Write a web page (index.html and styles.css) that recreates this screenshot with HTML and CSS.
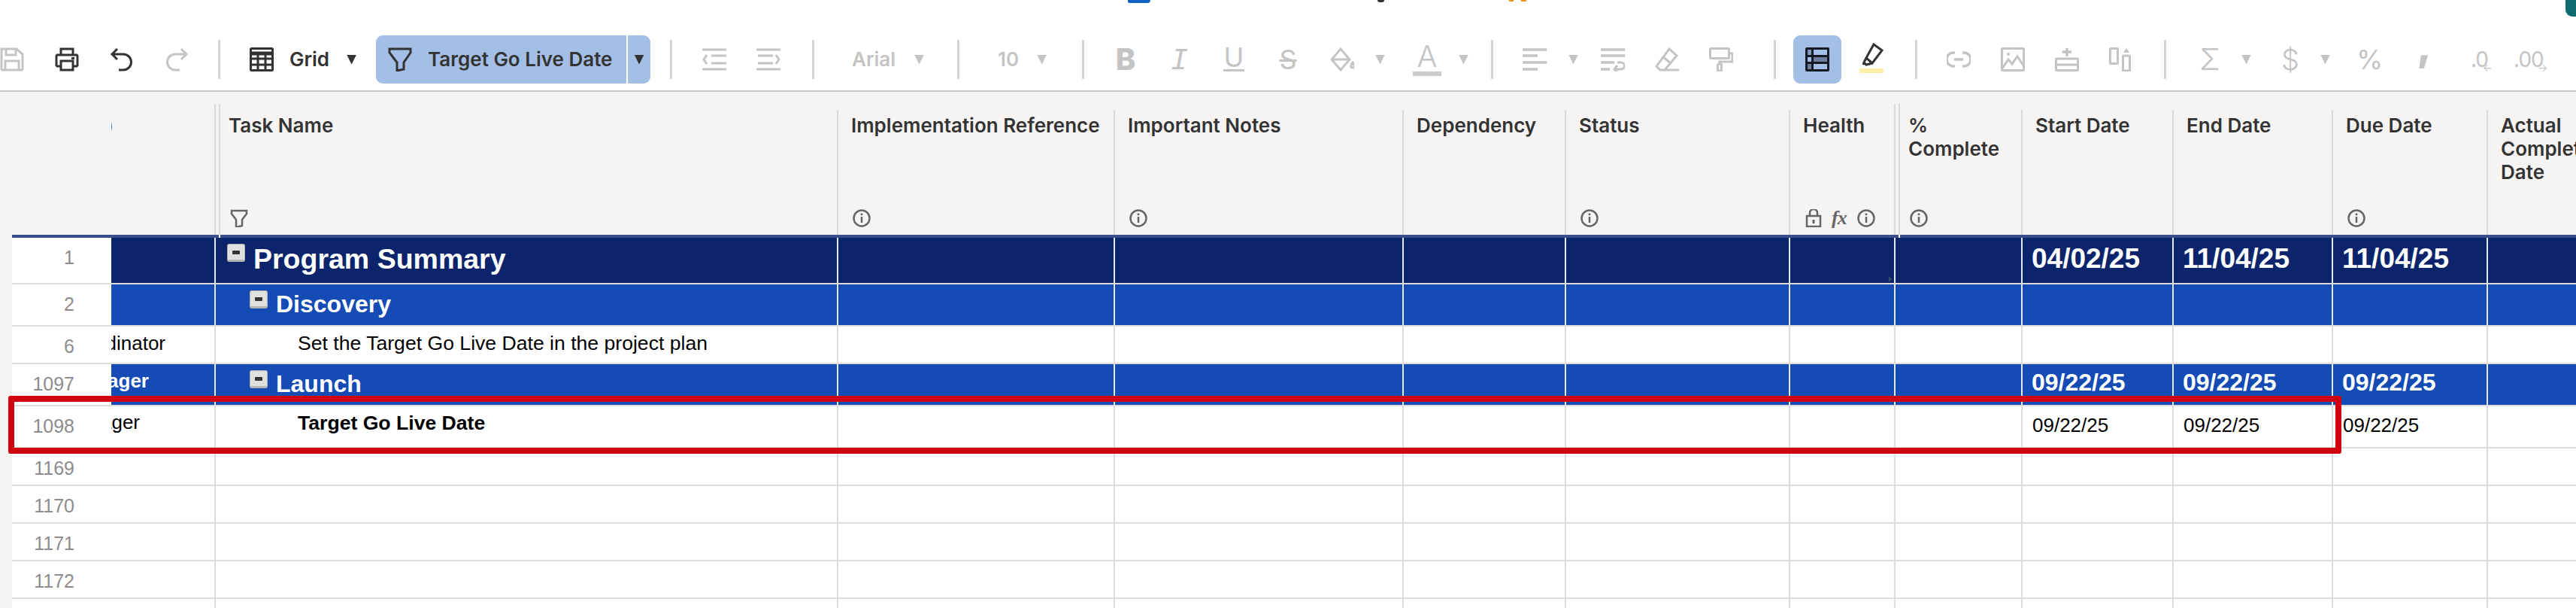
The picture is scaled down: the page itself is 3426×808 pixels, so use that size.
FILE: index.html
```html
<!DOCTYPE html>
<html lang="en">
<head>
<meta charset="utf-8">
<title>Target Go Live Date</title>
<link rel="stylesheet" href="styles.css">
</head>
<body>
<svg class="sprite" aria-hidden="true">
  <symbol id="i-save" viewBox="0 0 32 32"><path d="M2 2h20l8 7v20l-1 1H3l-1-1zM8 2v8h13V2M7 30V18h18v12" fill="none" stroke="currentColor" stroke-width="3"/></symbol>
  <symbol id="i-print" viewBox="0 0 32 32"><path d="M8 10V2h16v8M8 25H3l-1-1V11l1-1h26l1 1v13l-1 1h-5" fill="none" stroke="currentColor" stroke-width="3"/><rect x="8" y="18" width="16" height="12" fill="none" stroke="currentColor" stroke-width="3"/><rect x="22" y="13" width="4" height="3" fill="currentColor"/></symbol>
  <symbol id="i-undo" viewBox="0 0 32 32"><path d="M10 2L3 9l7 7M3 9h15a10.500 10.500 0 0 1 0 21h-6" fill="none" stroke="currentColor" stroke-width="3"/></symbol>
  <symbol id="i-redo" viewBox="0 0 32 32"><path d="M22 2l7 7-7 7M29 9H14a10.500 10.500 0 0 0 0 21h6" fill="none" stroke="currentColor" stroke-width="3"/></symbol>
  <symbol id="i-table" viewBox="0 0 32 32"><rect x="1.500" y="1.500" width="29" height="29" rx="1" fill="none" stroke="currentColor" stroke-width="3"/><path d="M1 8h30" stroke="currentColor" stroke-width="5"/><path d="M1 15h30M1 23h30M11 10v21M21 10v21" stroke="currentColor" stroke-width="3"/></symbol>
  <symbol id="i-funnel" viewBox="0 0 32 32"><path d="M2 2h28v5L21 20v9l-9 2V20L2 7z" fill="none" stroke="currentColor" stroke-width="3"/></symbol>
  <symbol id="i-outdent" viewBox="0 0 32 32"><path d="M0 3h32M0 29h32M12 11h20M12 21h20M6 10l-4 6 4 6" fill="none" stroke="currentColor" stroke-width="3"/></symbol>
  <symbol id="i-indent" viewBox="0 0 32 32"><path d="M0 3h32M0 29h32M2 11h20M2 21h20M26 10l4 6-4 6" fill="none" stroke="currentColor" stroke-width="3"/></symbol>
  <symbol id="i-fill" viewBox="0 0 32 32"><path d="M14 2L2 16l12 14 12-14z M2 16h24" fill="none" stroke="currentColor" stroke-width="3"/><path d="M30 20c-3 4-3 7 0 7s3-3 0-7z" fill="none" stroke="currentColor" stroke-width="3"/></symbol>
  <symbol id="i-align" viewBox="0 0 32 32"><path d="M0 3h32M0 11h20M0 20h32M0 29h20" fill="none" stroke="currentColor" stroke-width="3.500"/></symbol>
  <symbol id="i-wrap" viewBox="0 0 32 32"><path d="M0 3h32M0 11h32M0 20h18M0 29h12" fill="none" stroke="currentColor" stroke-width="3.500"/><path d="M22 20h5a4 4 0 0 1 0 9h-8M22 24l-4 5 4 4" fill="none" stroke="currentColor" stroke-width="3"/></symbol>
  <symbol id="i-eraser" viewBox="0 0 32 32"><path d="M19 2l10 9-16 19H7l-5-5zM10 12l11 9M10 30h22" fill="none" stroke="currentColor" stroke-width="3"/></symbol>
  <symbol id="i-roller" viewBox="0 0 32 32"><rect x="1.500" y="1.500" width="25" height="13" rx="1" fill="none" stroke="currentColor" stroke-width="3"/><path d="M27 8h4v11H14v3" fill="none" stroke="currentColor" stroke-width="3"/><rect x="11.500" y="22" width="5" height="9" rx="1" fill="none" stroke="currentColor" stroke-width="3"/></symbol>
  <symbol id="i-grid-on" viewBox="0 0 32 32"><rect width="32" height="32" rx="2" fill="#141a24"/><rect x="3" y="3" width="5" height="7" fill="#7f99bd"/><rect x="11" y="3" width="18" height="7" fill="#a3bfe5"/><rect x="3" y="13" width="5" height="6" fill="#a3bfe5"/><rect x="11" y="13" width="18" height="6" fill="#6b7f9c"/><rect x="3" y="22" width="5" height="7" fill="#6b7f9c"/><rect x="11" y="22" width="18" height="7" fill="#a3bfe5"/></symbol>
  <symbol id="i-marker" viewBox="0 0 32 32"><path d="M19 2l11 8-13 17-8-7zM9 20l-3 6 3 3 8-2M6 26l-1 3" fill="none" stroke="currentColor" stroke-width="3"/></symbol>
  <symbol id="i-link" viewBox="0 0 32 32"><path d="M11 7H9a9 9 0 0 0 0 18h2M21 7h2a9 9 0 0 1 0 18h-2M10 16h12" fill="none" stroke="currentColor" stroke-width="3.500"/></symbol>
  <symbol id="i-image" viewBox="0 0 32 32"><rect x="1.500" y="1.500" width="29" height="29" rx="1" fill="none" stroke="currentColor" stroke-width="3"/><path d="M2 28l8-12 5 6 7-10 8 12" fill="none" stroke="currentColor" stroke-width="3"/><circle cx="10" cy="9" r="2" fill="currentColor"/></symbol>
  <symbol id="i-row" viewBox="0 0 32 32"><path d="M16 1v11M10 6h12" fill="none" stroke="currentColor" stroke-width="3.500"/><rect x="1.500" y="15" width="29" height="15.500" rx="1" fill="none" stroke="currentColor" stroke-width="3"/><path d="M2 23h28" stroke="currentColor" stroke-width="3"/></symbol>
  <symbol id="i-col" viewBox="0 0 32 32"><rect x="1.500" y="1.500" width="10" height="20" rx="1" fill="none" stroke="currentColor" stroke-width="3"/><rect x="18.500" y="11" width="9" height="20" rx="1" fill="none" stroke="currentColor" stroke-width="3"/><path d="M23 1l4 6h-8z" fill="currentColor"/></symbol>
  <symbol id="i-info" viewBox="0 0 24 24"><circle cx="12" cy="12" r="10.500" fill="none" stroke="currentColor" stroke-width="2.500"/><path d="M12 10v8" stroke="currentColor" stroke-width="2.500"/><circle cx="12" cy="6.800" r="1.500" fill="currentColor"/></symbol>
  <symbol id="i-lock" viewBox="0 0 24 24"><path d="M7 9V5a5 5 0 0 1 10 0v4" fill="none" stroke="currentColor" stroke-width="2.500"/><rect x="3" y="9" width="18" height="14" fill="none" stroke="currentColor" stroke-width="2.500"/><path d="M12 14v5" stroke="currentColor" stroke-width="3"/></symbol>
  <symbol id="i-ftn" viewBox="0 0 24 24"><path d="M2 2h20v4l-6 8v8l-8 2V14L2 6z" fill="none" stroke="currentColor" stroke-width="2.500"/></symbol>
</svg>

<div class="title-bits">
  <span class="bit bit-doc"></span>
  <span class="bit bit-dark"></span>
  <span class="bit bit-star-a"></span>
  <span class="bit bit-star-b"></span>
  <span class="bit bit-avatar"></span>
</div>

<div class="toolbar">
  <div class="tg s1">
    <svg class="ic off"><use href="#i-save"/></svg>
    <svg class="ic on"><use href="#i-print"/></svg>
    <svg class="ic on"><use href="#i-undo"/></svg>
    <svg class="ic off"><use href="#i-redo"/></svg>
  </div>
  <i class="sep"></i>
  <div class="tg s2">
    <svg class="ic on"><use href="#i-table"/></svg>
    <span class="tb-label grid-label">Grid</span>
    <i class="caret on grid-caret"></i>
    <div class="filter-btn">
      <svg class="ic on"><use href="#i-funnel"/></svg>
      <span class="tb-label filter-label">Target Go Live Date</span>
      <span class="filter-split"><i class="caret on"></i></span>
    </div>
  </div>
  <i class="sep"></i>
  <div class="tg s3">
    <svg class="ic off"><use href="#i-outdent"/></svg>
    <svg class="ic off"><use href="#i-indent"/></svg>
  </div>
  <i class="sep"></i>
  <div class="tg s4">
    <span class="tb-label muted">Arial</span>
    <i class="caret off"></i>
  </div>
  <i class="sep"></i>
  <div class="tg s5">
    <span class="tb-label muted">10</span>
    <i class="caret off"></i>
  </div>
  <i class="sep"></i>
  <div class="tg s6">
    <span class="glyph g-b">B</span>
    <span class="glyph g-i">I</span>
    <span class="glyph g-u">U</span>
    <span class="glyph g-s">S</span>
    <svg class="ic off"><use href="#i-fill"/></svg>
    <i class="caret off c-fill"></i>
    <span class="glyph g-a">A</span>
    <i class="caret off c-a"></i>
  </div>
  <i class="sep"></i>
  <div class="tg s7">
    <svg class="ic off"><use href="#i-align"/></svg>
    <i class="caret off c-align"></i>
    <svg class="ic off ic-wrap"><use href="#i-wrap"/></svg>
    <svg class="ic off ic-eraser"><use href="#i-eraser"/></svg>
    <svg class="ic off ic-roller"><use href="#i-roller"/></svg>
  </div>
  <i class="sep"></i>
  <div class="tg s8">
    <div class="grid-btn"><svg class="ic"><use href="#i-grid-on"/></svg></div>
    <div class="marker"><svg class="ic on"><use href="#i-marker"/></svg></div>
  </div>
  <i class="sep"></i>
  <div class="tg s9">
    <svg class="ic off"><use href="#i-link"/></svg>
    <svg class="ic off"><use href="#i-image"/></svg>
    <svg class="ic off"><use href="#i-row"/></svg>
    <svg class="ic off"><use href="#i-col"/></svg>
  </div>
  <i class="sep"></i>
  <div class="tg s10">
    <span class="glyph g-sum">Σ</span>
    <i class="caret off c-sum"></i>
    <span class="glyph g-usd">$</span>
    <i class="caret off c-usd"></i>
    <span class="glyph g-pct">%</span>
    <span class="glyph g-comma">,</span>
    <span class="dec dec-less">.0<small>←</small></span>
    <span class="dec dec-more">.00<small>→</small></span>
  </div>
</div>

<div class="sheet">
  <div class="head">
    <div class="hc hc-num"></div>
    <div class="hc hc-frozen"><span class="clip clip-head">Assigned To (Role)</span></div>
    <div class="hc split"><span class="hname">Task Name</span><div class="hicons"><svg class="hi"><use href="#i-ftn"/></svg></div></div>
    <div class="hc"><span class="hname">Implementation Reference</span><div class="hicons"><svg class="hi"><use href="#i-info"/></svg></div></div>
    <div class="hc"><span class="hname">Important Notes</span><div class="hicons"><svg class="hi"><use href="#i-info"/></svg></div></div>
    <div class="hc"><span class="hname">Dependency</span></div>
    <div class="hc"><span class="hname">Status</span><div class="hicons"><svg class="hi"><use href="#i-info"/></svg></div></div>
    <div class="hc"><span class="hname">Health</span><div class="hicons"><svg class="hi"><use href="#i-lock"/></svg><span class="fx">fx</span><svg class="hi"><use href="#i-info"/></svg></div></div>
    <div class="hc split"><span class="hname">%<br>Complete</span><div class="hicons"><svg class="hi"><use href="#i-info"/></svg></div></div>
    <div class="hc"><span class="hname">Start Date</span></div>
    <div class="hc"><span class="hname">End Date</span></div>
    <div class="hc"><span class="hname">Due Date</span><div class="hicons"><svg class="hi"><use href="#i-info"/></svg></div></div>
    <div class="hc hc-last"><span class="hname">Actual<br>Complete<br>Date</span></div>
  </div>

  <div class="row r-program">
    <div class="c num">1</div><div class="c frozen"></div>
    <div class="c task lvl0"><span class="tog"></span><span>Program Summary</span></div>
    <div class="c"></div><div class="c"></div><div class="c"></div><div class="c"></div><div class="c health-flag"></div><div class="c"></div>
    <div class="c date">04/02/25</div><div class="c date">11/04/25</div><div class="c date">11/04/25</div><div class="c end"></div>
  </div>
  <div class="row r-phase r-discovery">
    <div class="c num">2</div><div class="c frozen"></div>
    <div class="c task lvl1"><span class="tog"></span><span>Discovery</span></div>
    <div class="c"></div><div class="c"></div><div class="c"></div><div class="c"></div><div class="c"></div><div class="c"></div>
    <div class="c"></div><div class="c"></div><div class="c"></div><div class="c end"></div>
  </div>
  <div class="row r-plain r-short">
    <div class="c num">6</div><div class="c frozen"><span class="clip clip-coord">Coordinator</span></div>
    <div class="c task lvl2"><span>Set the Target Go Live Date in the project plan</span></div>
    <div class="c"></div><div class="c"></div><div class="c"></div><div class="c"></div><div class="c"></div><div class="c"></div>
    <div class="c"></div><div class="c"></div><div class="c"></div><div class="c end"></div>
  </div>
  <div class="row r-phase r-launch">
    <div class="c num">1097</div><div class="c frozen"><span class="clip clip-mgr-b">Project Manager</span></div>
    <div class="c task lvl1"><span class="tog"></span><span>Launch</span></div>
    <div class="c"></div><div class="c"></div><div class="c"></div><div class="c"></div><div class="c"></div><div class="c"></div>
    <div class="c date">09/22/25</div><div class="c date">09/22/25</div><div class="c date">09/22/25</div><div class="c end"></div>
  </div>
  <div class="row r-plain r-tall">
    <div class="c num">1098</div><div class="c frozen"><span class="clip clip-mgr">Project Manager</span></div>
    <div class="c task lvl2 strong"><span>Target Go Live Date</span></div>
    <div class="c"></div><div class="c"></div><div class="c"></div><div class="c"></div><div class="c"></div><div class="c"></div>
    <div class="c date">09/22/25</div><div class="c date">09/22/25</div><div class="c date">09/22/25</div><div class="c end"></div>
  </div>
  <div class="row r-plain r-short">
    <div class="c num">1169</div><div class="c frozen"></div><div class="c task"></div>
    <div class="c"></div><div class="c"></div><div class="c"></div><div class="c"></div><div class="c"></div><div class="c"></div>
    <div class="c"></div><div class="c"></div><div class="c"></div><div class="c end"></div>
  </div>
  <div class="row r-plain r-short">
    <div class="c num">1170</div><div class="c frozen"></div><div class="c task"></div>
    <div class="c"></div><div class="c"></div><div class="c"></div><div class="c"></div><div class="c"></div><div class="c"></div>
    <div class="c"></div><div class="c"></div><div class="c"></div><div class="c end"></div>
  </div>
  <div class="row r-plain r-short">
    <div class="c num">1171</div><div class="c frozen"></div><div class="c task"></div>
    <div class="c"></div><div class="c"></div><div class="c"></div><div class="c"></div><div class="c"></div><div class="c"></div>
    <div class="c"></div><div class="c"></div><div class="c"></div><div class="c end"></div>
  </div>
  <div class="row r-plain r-short">
    <div class="c num">1172</div><div class="c frozen"></div><div class="c task"></div>
    <div class="c"></div><div class="c"></div><div class="c"></div><div class="c"></div><div class="c"></div><div class="c"></div>
    <div class="c"></div><div class="c"></div><div class="c"></div><div class="c end"></div>
  </div>
  <div class="row r-plain r-short">
    <div class="c num"></div><div class="c frozen"></div><div class="c task"></div>
    <div class="c"></div><div class="c"></div><div class="c"></div><div class="c"></div><div class="c"></div><div class="c"></div>
    <div class="c"></div><div class="c"></div><div class="c"></div><div class="c end"></div>
  </div>

  <div class="callout"></div>
</div>
</body>
</html>
```

FILE: styles.css
```css
* { box-sizing: border-box; }
html, body { margin: 0; height: 808px; overflow: hidden; background: #f5f4f2; }
body { position: relative; font-family: "Liberation Sans", Arial, sans-serif; color: #000; }
.sprite { position: absolute; width: 0; height: 0; overflow: hidden; }

/* Cropped title bar remnants */
.title-bits { position: absolute; inset: 0 0 auto 0; height: 0; z-index: 3; }
.bit { position: absolute; top: 0; display: block; }
.bit-doc { left: 1500px; width: 30px; height: 4px; background: #1261c4; border-radius: 0 0 6px 3px; }
.bit-dark { left: 1832px; width: 9px; height: 3px; background: #2f2f2f; border-radius: 0 0 4px 4px; }
.bit-star-a { left: 2007px; width: 6px; height: 2px; background: #e8960c; }
.bit-star-b { left: 2023px; width: 7px; height: 2px; background: #e8960c; }
.bit-avatar { left: 3412px; width: 14px; height: 22px; background: #0e6b70; border-radius: 0 0 0 9px; }

/* Toolbar */
.toolbar { display: flex; height: 122px; background: #fff; border-bottom: 2px solid #c9c8c6; }
.tg { display: flex; align-items: center; height: 64px; margin-top: 47px; }
.sep { display: block; flex: none; width: 3px; height: 52px; margin-top: 53px; background: #d4d4d2; }
.ic { display: block; flex: none; width: 32px; height: 32px; }
.on { color: #333; }
.off { color: #c4c4c4; }
.tb-label { font: 600 26px/32px Inter, "Liberation Sans", sans-serif; color: #333; white-space: nowrap; }
.tb-label.muted { color: #c4c4c4; }
.caret { display: block; flex: none; width: 13px; height: 13px; background: currentColor; clip-path: polygon(0 0, 100% 0, 50% 100%); }

.s1 { width: 290px; gap: 41px; }
.s2 { width: 598px; padding-left: 39px; }
.grid-label { margin-left: 21px; }
.grid-caret { margin-left: 23px; }
.filter-btn { display: flex; align-items: center; width: 365px; height: 64px; margin-left: 26px; padding-left: 16px; background: #a3bfe5; border-radius: 9px; }
.filter-label { margin-left: 21px; }
.filter-split { display: flex; align-items: center; justify-content: center; width: 32px; height: 64px; margin-left: auto; border-left: 2px solid #fff; }
.s3 { width: 186px; padding-left: 40px; gap: 40px; }
.s4 { width: 190px; padding-left: 50px; gap: 25px; }
.s5 { width: 163px; padding-left: 51px; gap: 24px; }
.s6 { width: 541px; padding-left: 39px; gap: 40px; }
.c-fill { margin-left: -12px; }
.c-a { margin-left: -14px; }
.s7 { width: 373px; padding-left: 39px; }
.c-align { margin-left: 29px; }
.ic-wrap { margin-left: 30px; }
.ic-eraser, .ic-roller { margin-left: 40px; }
.s8 { width: 185px; padding-left: 23px; }
.grid-btn { display: flex; align-items: center; justify-content: center; width: 64px; height: 64px; background: #a3bfe5; border-radius: 9px; }
.marker { position: relative; margin-left: 24px; height: 44px; }
.marker::after { content: ""; position: absolute; left: 0; top: 34px; width: 32px; height: 6px; background: #fdeea6; border-radius: 1px; }
.s9 { width: 328px; padding-left: 39px; gap: 40px; }
.s10 { flex: 1; padding-left: 42px; }

.glyph { display: block; flex: none; width: 32px; height: 40px; text-align: center; color: #c4c4c4; font-family: Inter, "Liberation Sans", sans-serif; line-height: 40px; }
.g-b { font-size: 40px; font-weight: 800; }
.g-i { font-family: "DejaVu Sans Mono", monospace; font-style: italic; font-size: 38px; }
.g-u { font-size: 36px; font-weight: 400; line-height: 34px; position: relative; }
.g-u::after { content: ""; position: absolute; left: 2px; right: 2px; top: 33px; height: 3px; background: #c4c4c4; }
.g-s { font-size: 36px; font-weight: 400; text-decoration: line-through; text-decoration-thickness: 3px; }
.g-a { font-size: 40px; font-weight: 300; line-height: 34px; height: 48px; margin-left: 0; position: relative; margin-top: 6px; }
.g-a::after { content: ""; position: absolute; left: -3px; right: -3px; top: 37px; height: 6px; background: #cbcbcb; }
.g-sum { font-size: 40px; font-weight: 300; }
.c-sum { margin-left: 26px; }
.g-usd { font-size: 38px; font-weight: 300; margin-left: 36px; }
.c-usd { margin-left: 24px; }
.g-pct { font-size: 36px; font-weight: 400; margin-left: 35px; }
.g-comma { font-size: 56px; font-weight: 800; margin-left: 42px; line-height: 2px; }
.dec { position: relative; display: block; flex: none; font: 400 28px/40px Inter, "Liberation Sans", sans-serif; color: #c4c4c4; letter-spacing: -1px; }
.dec small { position: absolute; right: -6px; top: 22px; font-size: 14px; line-height: 18px; letter-spacing: 0; }
.dec-less { margin-left: 46px; }
.dec-more { margin-left: 34px; }

/* Sheet */
.sheet { position: relative; height: 686px; overflow: hidden; }
.head, .row { display: grid; grid-template-columns: 132px 139px 828px 368px 384px 216px 298px 140px 169px 201px 212px 206px 1fr; margin-left: 16px; }
.head { height: 194px; padding-top: 24px; border-bottom: 4px solid #3a4d8c; margin-right: 0; }
.hc { position: relative; display: flex; flex-direction: column; justify-content: space-between; min-width: 0; padding: 5px 0 10px 17px; border-right: 2px solid #dddcda; font: 600 26px/31px Inter, "Liberation Sans", sans-serif; color: #333; }
.hc-num { border-right: 0; }
.hc-frozen { display: block; padding: 0; }
.hc-last { border-right: 0; }
.hname { display: block; white-space: nowrap; }
.hicons { display: flex; align-items: center; gap: 12px; height: 24px; margin-left: 2px; color: #666; }
.hi { display: block; flex: none; width: 24px; height: 24px; }
.fx { width: 22px; font: italic 700 26px/24px "Liberation Serif", serif; color: #666; letter-spacing: -1px; }
.split::before { content: ""; position: absolute; left: 4px; top: -8px; bottom: -4px; width: 2px; background: linear-gradient(#dddcda calc(100% - 4px), #fff 0); }
.split::after { content: ""; position: absolute; left: -2px; top: -8px; width: 2px; height: 8px; background: #dddcda; }

.clip { display: flex; justify-content: flex-end; overflow: hidden; white-space: nowrap; }
.clip-head { width: 3px; margin-top: 5px; }
.clip-coord { width: 72px; }
.clip-mgr { width: 38px; }
.clip-mgr-b { width: 50px; font-weight: 700; color: #fff; }

.row { background: #fff; border-bottom: 2px solid #dddcda; }
.c { position: relative; min-width: 0; border-right: 2px solid #dddcda; font-size: 26px; line-height: 30px; }
.c.num { border-right: 0; padding: 11px 49px 0 0; text-align: right; background: #fff; color: #8c8c8c; font-size: 25px; }
.c.frozen { padding-top: 7px; }
.c.end { border-right: 0; }
.c.date { padding: 10px 0 0 13px; }
.task { display: flex; align-items: flex-start; white-space: nowrap; }
.tog { position: relative; display: block; flex: none; width: 24px; height: 24px; background: #e0e0e0; border: 1px solid #b4b4b4; border-bottom-width: 3px; border-radius: 3px; }
.tog::after { content: ""; position: absolute; left: 6px; top: 8px; width: 10px; height: 5px; background: #333; border-radius: 1px; }

.r-program { height: 62px; background: #0c246b; color: #fff; }
.r-phase { height: 56px; background: #144bb5; color: #fff; }
.r-plain { background: #fff; }
.r-short { height: 50px; }
.r-tall { height: 56px; }
.r-program .c:not(.num), .r-phase .c:not(.num) { border-right-color: #e6e9f2; }
.r-program .c.end, .r-phase .c.end { border-right: 0; }
.r-program .c.date { padding: 8px 0 0 12px; font-size: 37px; line-height: 40px; font-weight: 700; }
.r-phase .c.date { padding: 6px 0 0 12px; font-size: 32px; line-height: 36px; font-weight: 700; }
.lvl0 { padding: 8px 0 0 15px; font-size: 37.500px; line-height: 40px; font-weight: 700; gap: 11px; }
.lvl1 { font-size: 32px; line-height: 36px; font-weight: 700; padding-left: 45px; gap: 11px; }
.r-discovery .lvl1 { padding-top: 8px; }
.r-launch .lvl1 { padding-top: 8px; }
.lvl2 { padding: 7px 0 0 109px; font-size: 26.600px; }
.strong { font-weight: 700; }
.r-tall .frozen { padding-top: 6px; }
.health-flag::after { content: ""; position: absolute; right: 3px; top: 51px; border-left: 4px solid #3d4a6a; border-top: 4px solid transparent; border-bottom: 4px solid transparent; }

.callout { position: absolute; left: 11px; top: 404px; width: 3103px; height: 77px; border: 8px solid #d0000f; border-radius: 3px; pointer-events: none; }
```
